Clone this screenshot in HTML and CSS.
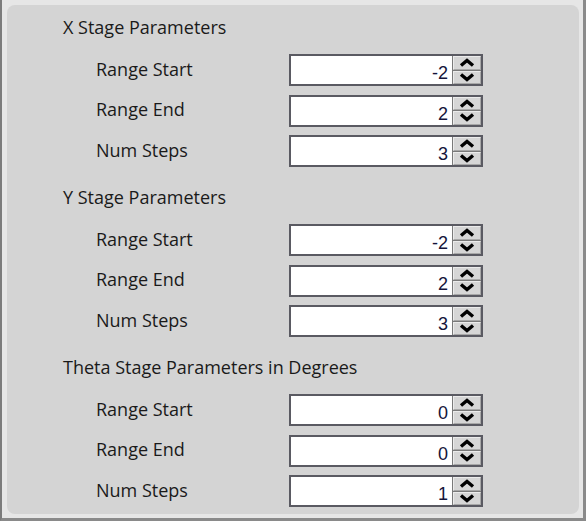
FILE: index.html
```html
<!DOCTYPE html>
<html>
<head>
<meta charset="utf-8">
<link rel="stylesheet" href="styles.css">
</head>
<body>
<div class="frame">
  <div class="panel">
    <section class="group">
      <div class="heading">X Stage Parameters</div>
      <div class="row"><span class="label">Range Start</span><div class="num"><span class="val">-2</span><div class="spin"><button class="btn up"><svg viewBox="0 0 16 9"><polyline points="2,7.5 8,2.5 14,7.5"/></svg></button><button class="btn down"><svg viewBox="0 0 16 9"><polyline points="2,1.5 8,6.5 14,1.5"/></svg></button></div></div></div>
      <div class="row"><span class="label">Range End</span><div class="num"><span class="val">2</span><div class="spin"><button class="btn up"><svg viewBox="0 0 16 9"><polyline points="2,7.5 8,2.5 14,7.5"/></svg></button><button class="btn down"><svg viewBox="0 0 16 9"><polyline points="2,1.5 8,6.5 14,1.5"/></svg></button></div></div></div>
      <div class="row"><span class="label">Num Steps</span><div class="num"><span class="val">3</span><div class="spin"><button class="btn up"><svg viewBox="0 0 16 9"><polyline points="2,7.5 8,2.5 14,7.5"/></svg></button><button class="btn down"><svg viewBox="0 0 16 9"><polyline points="2,1.5 8,6.5 14,1.5"/></svg></button></div></div></div>
    </section>
    <section class="group">
      <div class="heading">Y Stage Parameters</div>
      <div class="row"><span class="label">Range Start</span><div class="num"><span class="val">-2</span><div class="spin"><button class="btn up"><svg viewBox="0 0 16 9"><polyline points="2,7.5 8,2.5 14,7.5"/></svg></button><button class="btn down"><svg viewBox="0 0 16 9"><polyline points="2,1.5 8,6.5 14,1.5"/></svg></button></div></div></div>
      <div class="row"><span class="label">Range End</span><div class="num"><span class="val">2</span><div class="spin"><button class="btn up"><svg viewBox="0 0 16 9"><polyline points="2,7.5 8,2.5 14,7.5"/></svg></button><button class="btn down"><svg viewBox="0 0 16 9"><polyline points="2,1.5 8,6.5 14,1.5"/></svg></button></div></div></div>
      <div class="row"><span class="label">Num Steps</span><div class="num"><span class="val">3</span><div class="spin"><button class="btn up"><svg viewBox="0 0 16 9"><polyline points="2,7.5 8,2.5 14,7.5"/></svg></button><button class="btn down"><svg viewBox="0 0 16 9"><polyline points="2,1.5 8,6.5 14,1.5"/></svg></button></div></div></div>
    </section>
    <section class="group">
      <div class="heading">Theta Stage Parameters in Degrees</div>
      <div class="row"><span class="label">Range Start</span><div class="num"><span class="val">0</span><div class="spin"><button class="btn up"><svg viewBox="0 0 16 9"><polyline points="2,7.5 8,2.5 14,7.5"/></svg></button><button class="btn down"><svg viewBox="0 0 16 9"><polyline points="2,1.5 8,6.5 14,1.5"/></svg></button></div></div></div>
      <div class="row"><span class="label">Range End</span><div class="num"><span class="val">0</span><div class="spin"><button class="btn up"><svg viewBox="0 0 16 9"><polyline points="2,7.5 8,2.5 14,7.5"/></svg></button><button class="btn down"><svg viewBox="0 0 16 9"><polyline points="2,1.5 8,6.5 14,1.5"/></svg></button></div></div></div>
      <div class="row"><span class="label">Num Steps</span><div class="num"><span class="val">1</span><div class="spin"><button class="btn up"><svg viewBox="0 0 16 9"><polyline points="2,7.5 8,2.5 14,7.5"/></svg></button><button class="btn down"><svg viewBox="0 0 16 9"><polyline points="2,1.5 8,6.5 14,1.5"/></svg></button></div></div></div>
    </section>
  </div>
</div>
</body>
</html>
```
FILE: styles.css
```css
html, body {
  margin: 0;
  padding: 0;
}
body {
  width: 586px;
  height: 521px;
  overflow: hidden;
  font-family: "Open Sans", "Noto Sans", sans-serif;
  color: #1a1a1a;
}
.frame {
  box-sizing: border-box;
  width: 586px;
  height: 521px;
  background: #e6e6e6;
  border-left: 2px solid #7c7c7c;
  border-right: 3px solid #8a8a8a;
  border-bottom: 3px solid #8a8a8a;
  padding: 5px 4px 4px 5px;
}
.panel {
  box-sizing: border-box;
  height: 100%;
  background: #d4d4d4;
  border-radius: 8px;
  padding-top: 9px;
  display: flex;
  flex-direction: column;
  gap: 17px;
}
.group {
  display: flex;
  flex-direction: column;
}
.heading {
  height: 26px;
  line-height: 26px;
  font-size: 18px;
  padding-left: 56px;
  margin-bottom: 14px;
}
.row {
  display: flex;
  align-items: center;
  height: 32px;
  margin-bottom: 8.5px;
}
.row:last-child {
  margin-bottom: 0;
}
.label {
  width: 193px;
  padding-left: 89px;
  font-size: 18px;
  line-height: 26px;
  margin-top: -3px;
}
.num {
  box-sizing: border-box;
  width: 194px;
  height: 32px;
  border: 2px solid #5a5a62;
  background: #ffffff;
  display: flex;
}
.val {
  flex: 1;
  text-align: right;
  padding-right: 4px;
  font-family: "Liberation Sans", Arial, sans-serif;
  font-size: 18px;
  line-height: 30px;
  padding-top: 2px;
  color: #14143a;
}
.spin {
  width: 28px;
  display: flex;
  flex-direction: column;
  border-left: 1px solid #7a7a7a;
  background: #7a7a7a;
  gap: 1px;
}
.btn {
  flex: 1;
  margin: 0;
  padding: 0;
  border: 1px solid #a8a8a8;
  border-top-color: #ececec;
  border-left-color: #ececec;
  background: #d6d6d6;
  display: flex;
  align-items: center;
  justify-content: center;
}
.btn svg {
  width: 16px;
  height: 9px;
  display: block;
}
.btn polyline {
  fill: none;
  stroke: #000;
  stroke-width: 3.4;
  stroke-linejoin: miter;
}
```
